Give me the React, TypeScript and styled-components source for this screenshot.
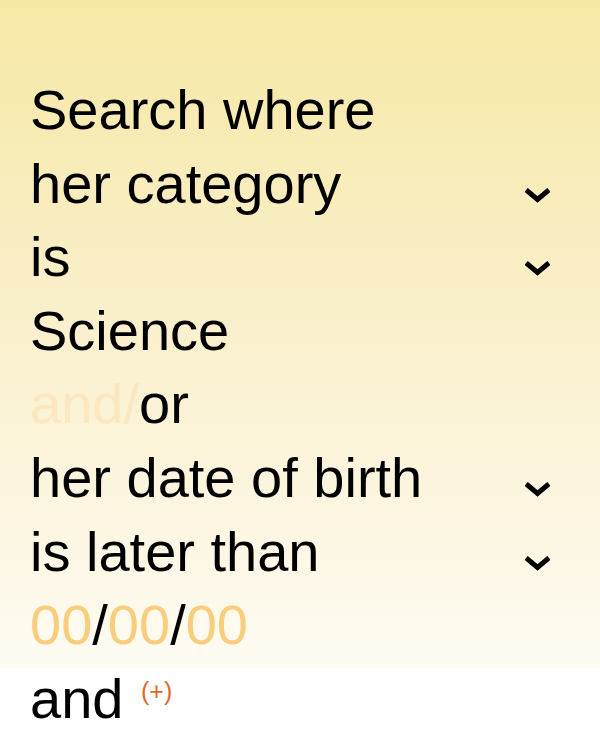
import React from "react";
import styled, { createGlobalStyle } from "styled-components";

const Global = createGlobalStyle`
  html, body { margin: 0; padding: 0; background: #ffffff; }
  body { font-family: "Liberation Sans", Arial, sans-serif; }
`;

const Page = styled.div`
  width: 600px;
  height: 752px;
  background: linear-gradient(to bottom, #f6e8a5 0px, #faf0cd 330px, #fefbf2 668px, #ffffff 669px, #ffffff 752px);
  padding: 73px 50px 0 30px;
  box-sizing: border-box;
  overflow: hidden;
`;

const Row = styled.div`
  display: flex;
  justify-content: space-between;
  align-items: flex-start;
  height: 73.6px;
  font-size: 56px;
  line-height: 73.6px;
  color: #000;
  white-space: nowrap;
`;

const Faded = styled.span`
  color: #fbe7c0;
`;

const Placeholder = styled.span`
  color: #f9cd7c;
`;

const Add = styled.sup`
  font-size: 25px;
  line-height: 0;
  color: #e0672a;
  vertical-align: 18px;
  margin-left: 2px;
`;

const ChevronIcon = styled.svg`
  display: block;
  width: 25px;
  height: 15px;
  margin-top: 41px;
  flex: none;
`;

const Chevron = () => (
  <ChevronIcon viewBox="0 0 25 15">
    <polyline
      points="3,3.5 12.5,11.5 22,3.5"
      fill="none"
      stroke="#000"
      strokeWidth="5"
      strokeLinecap="square"
      strokeLinejoin="miter"
    />
  </ChevronIcon>
);

export default function App() {
  return (
    <>
      <Global />
      <Page>
        <Row>Search where</Row>
        <Row>
          <span>her category</span>
          <Chevron />
        </Row>
        <Row>
          <span>is</span>
          <Chevron />
        </Row>
        <Row>Science</Row>
        <Row>
          <span>
            <Faded>and/</Faded>or
          </span>
        </Row>
        <Row>
          <span>her date of birth</span>
          <Chevron />
        </Row>
        <Row>
          <span>is later than</span>
          <Chevron />
        </Row>
        <Row>
          <span>
            <Placeholder>00</Placeholder>/<Placeholder>00</Placeholder>/<Placeholder>00</Placeholder>
          </span>
        </Row>
        <Row>
          <span>
            and <Add>(+)</Add>
          </span>
        </Row>
      </Page>
    </>
  );
}
